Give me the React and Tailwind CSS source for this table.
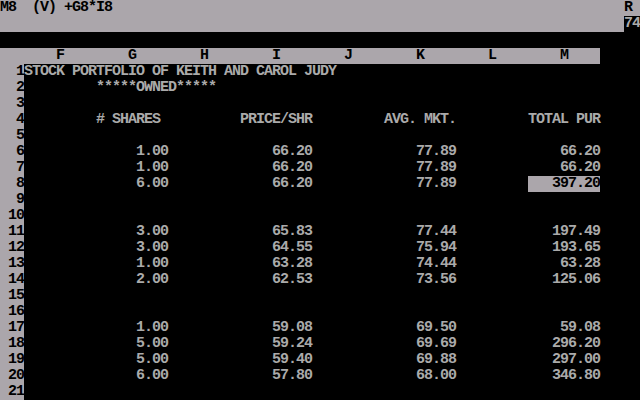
import React from "react";

const COLS = ["F", "G", "H", "I", "J", "K", "L", "M"];

// each row: cells keyed by column letter
const rows = [
  { n: 1, cells: { F: { t: "STOCK PORTFOLIO OF KEITH AND CAROL JUDY", left: true } } },
  { n: 2, cells: { G: { t: "*****OWNED*****", left: true } } },
  { n: 3, cells: {} },
  {
    n: 4,
    cells: {
      G: { t: "# SHARES", pad: true },
      I: { t: "PRICE/SHR" },
      K: { t: "AVG. MKT." },
      M: { t: "TOTAL PUR" },
    },
  },
  { n: 5, cells: {} },
  { n: 6, cells: { G: { t: "1.00" }, I: { t: "66.20" }, K: { t: "77.89" }, M: { t: "66.20" } } },
  { n: 7, cells: { G: { t: "1.00" }, I: { t: "66.20" }, K: { t: "77.89" }, M: { t: "66.20" } } },
  { n: 8, cells: { G: { t: "6.00" }, I: { t: "66.20" }, K: { t: "77.89" }, M: { t: "397.20", sel: true } } },
  { n: 9, cells: {} },
  { n: 10, cells: {} },
  { n: 11, cells: { G: { t: "3.00" }, I: { t: "65.83" }, K: { t: "77.44" }, M: { t: "197.49" } } },
  { n: 12, cells: { G: { t: "3.00" }, I: { t: "64.55" }, K: { t: "75.94" }, M: { t: "193.65" } } },
  { n: 13, cells: { G: { t: "1.00" }, I: { t: "63.28" }, K: { t: "74.44" }, M: { t: "63.28" } } },
  { n: 14, cells: { G: { t: "2.00" }, I: { t: "62.53" }, K: { t: "73.56" }, M: { t: "125.06" } } },
  { n: 15, cells: {} },
  { n: 16, cells: {} },
  { n: 17, cells: { G: { t: "1.00" }, I: { t: "59.08" }, K: { t: "69.50" }, M: { t: "59.08" } } },
  { n: 18, cells: { G: { t: "5.00" }, I: { t: "59.24" }, K: { t: "69.69" }, M: { t: "296.20" } } },
  { n: 19, cells: { G: { t: "5.00" }, I: { t: "59.40" }, K: { t: "69.88" }, M: { t: "297.00" } } },
  { n: 20, cells: { G: { t: "6.00" }, I: { t: "57.80" }, K: { t: "68.00" }, M: { t: "346.80" } } },
  { n: 21, cells: {} },
];

const Cell = ({ cell }) => {
  if (!cell) return <div className="w-[72px] shrink-0" />;
  let cls = "w-[72px] shrink-0 whitespace-pre ";
  cls += cell.left ? "text-left " : "text-right ";
  if (cell.pad) cls += "pr-2 ";
  cls += cell.sel ? "bg-[#aba6ab] text-black" : "text-[#aaaaaa]";
  return <div className={cls}>{cell.t}</div>;
};

export default function App() {
  return (
    <div className="w-[640px] h-[400px] bg-black overflow-hidden font-['Liberation_Mono',monospace] text-[15px] leading-4 tracking-[-1px] font-bold">
      {/* control panel */}
      <div className="flex h-8">
        <div className="flex-1 bg-[#aba6ab] text-black whitespace-pre">M8  (V) +G8*I8</div>
        <div className="w-4 flex flex-col">
          <div className="h-4 bg-[#aba6ab] text-black">R</div>
          <div className="h-4 bg-black text-[#aaaaaa] whitespace-pre">74</div>
        </div>
      </div>
      <div className="h-4" />

      {/* column header */}
      <div className="flex h-4 w-[600px] bg-[#aba6ab] text-black">
        <div className="w-6 shrink-0" />
        {COLS.map((c) => (
          <div key={c} className="w-[72px] shrink-0 text-center">
            {c}
          </div>
        ))}
      </div>

      {/* sheet rows */}
      {rows.map((r) => (
        <div key={r.n} className="flex h-4">
          <div className="w-6 shrink-0 bg-[#aba6ab] text-black text-right">{r.n}</div>
          {COLS.map((c) => (
            <Cell key={c} cell={r.cells[c]} />
          ))}
        </div>
      ))}
    </div>
  );
}
